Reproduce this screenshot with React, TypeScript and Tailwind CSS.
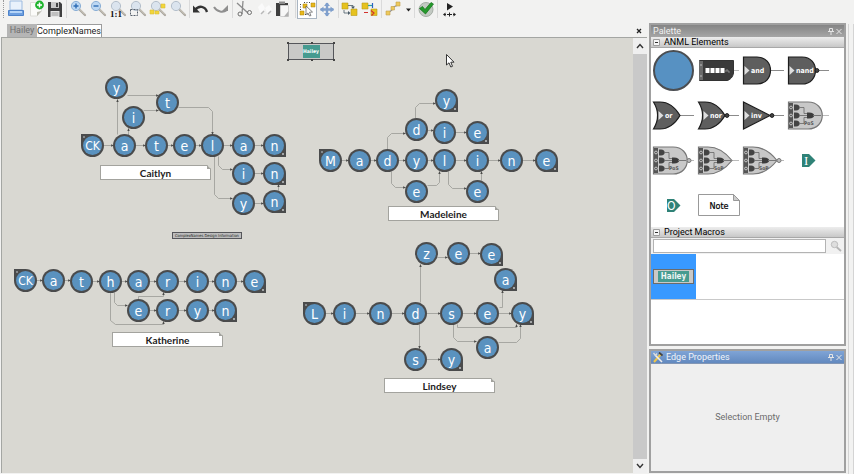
import type { ReactNode } from 'react';
import clsx from 'clsx';

type NodeKind = 'plain' | 'start' | 'report';
type GraphNode = [label: string, x: number, y: number, kind?: NodeKind];

// Top left corner of the drawing area on the diagram's grid
const ORIGIN = { x: 2, y: 38 };

const NODES: GraphNode[] = [
  // Caitlyn
  ['y', 116, 87], ['t', 167, 102], ['i', 133, 117],
  ['CK', 92, 145, 'start'], ['a', 124, 145], ['t', 156, 145], ['e', 184, 145], ['l', 212, 145],
  ['a', 243, 145], ['n', 274, 145, 'report'],
  ['i', 243, 173], ['n', 274, 173, 'report'],
  ['y', 243, 203], ['n', 274, 201, 'report'],
  // Madeleine
  ['y', 446, 100, 'report'],
  ['d', 416, 129], ['i', 444, 132], ['e', 477, 132, 'report'],
  ['M', 330, 160, 'start'], ['a', 359, 160], ['d', 387, 160], ['y', 416, 160], ['l', 444, 160],
  ['i', 477, 160], ['n', 511, 160], ['e', 546, 160, 'report'],
  ['e', 416, 191], ['e', 477, 191],
  // Katherine
  ['CK', 25, 280, 'start'], ['a', 53, 280], ['t', 81, 281], ['h', 110, 281], ['a', 138, 281],
  ['r', 167, 281], ['i', 197, 281], ['n', 225, 281], ['e', 254, 281, 'report'],
  ['e', 138, 310], ['r', 167, 310], ['y', 197, 310], ['n', 225, 310, 'report'],
  // Lindsey
  ['z', 426, 253], ['e', 458, 253], ['e', 491, 254, 'report'], ['a', 505, 279, 'report'],
  ['L', 314, 313, 'start'], ['i', 344, 313], ['n', 380, 313], ['d', 415, 313], ['s', 451, 313],
  ['e', 487, 313], ['y', 522, 313, 'report'],
  ['a', 487, 347], ['s', 415, 359], ['y', 451, 359, 'report'],
];

const EDGES = [
  // Caitlyn
  'M103 145H113', 'M135 145H145', 'M167 145H173', 'M195 145H201', 'M223 145H232', 'M254 145H263',
  'M117 134V99', 'M128 135V128', 'M127 95H158', 'M143 110H158',
  'M178 107H208L212 111V134', 'M218 156V165L222 169H232', 'M214 156V194L218 198H232',
  'M254 173H263', 'M254 203H263', 'M278 190V184',
  // Madeleine
  'M341 160H348', 'M370 160H376', 'M398 160H405', 'M427 160H433', 'M455 160H466', 'M488 160H500', 'M522 160H535',
  'M387 149V137L391 133H405', 'M415 118V107L419 103H435', 'M427 130H433', 'M455 132H466',
  'M391 171V183L395 187H405', 'M427 185H436L439 182V171', 'M448 171V184L452 188H466', 'M481 180V171',
  // Katherine
  'M36 280H42', 'M64 280H70', 'M92 281H99', 'M121 281H127', 'M149 281H156', 'M178 281H186', 'M208 281H214', 'M236 281H243',
  'M138 299V296H163V292', 'M114 292V302L117 305H127', 'M110 292V320L115 324H163V321',
  'M149 310H156', 'M178 310H186', 'M208 310H214',
  // Lindsey
  'M325 313H333', 'M355 313H369', 'M391 313H404', 'M426 313H440', 'M462 313H476', 'M498 313H511',
  'M420 302V264', 'M437 257H447', 'M469 253H480', 'M499 307H502V290', 'M419 324V348', 'M426 359H440',
  'M457 324V327H516V324', 'M453 324V337L457 341H476', 'M498 342H516L520 338V324',
];

const NOTES = [
  { text: 'Caitlyn', x: 100, y: 165 },
  { text: 'Madeleine', x: 388, y: 206 },
  { text: 'Katherine', x: 112, y: 332 },
  { text: 'Lindsey', x: 384, y: 378 },
];

function StateNode({ node }: { node: GraphNode }) {
  const [label, x, y, kind = 'plain'] = node;
  return (
    <div
      className={clsx(
        'absolute flex size-[23px] items-center justify-center bg-[#4a4b4c]',
        kind === 'plain' && 'rounded-full',
        kind === 'start' && 'rounded-full rounded-tl-[4px]',
        kind === 'report' && 'rounded-full rounded-br-[4px]',
      )}
      style={{ left: x - 11 - ORIGIN.x, top: y - 11 - ORIGIN.y }}
    >
      {kind === 'start' && <span className="absolute left-0.5 top-0.5 size-0.5 bg-[#85898c]" />}
      {kind === 'report' && <span className="absolute bottom-0.5 right-0.5 size-0.5 bg-[#a3a6a8]" />}
      <span
        className={clsx(
          'relative flex size-[19px] items-center justify-center rounded-full bg-[#5a92bf] leading-none text-white',
          label.length > 1 ? 'text-[12px]' : 'text-[14px]',
        )}
      >
        {label}
      </span>
    </div>
  );
}

function Note({ text, x, y }: { text: string; x: number; y: number }) {
  return (
    <div
      className="absolute h-[15px] w-[111px] border border-[#a3a39e] bg-white text-center font-['Lato',sans-serif] text-[10px] font-bold leading-[14px] text-[#1c1c1c]"
      style={{ left: x - ORIGIN.x, top: y - ORIGIN.y }}
    >
      {text}
      <svg className="absolute -right-px -top-px" width="4" height="4">
        <path d="M0 0H4V4Z" fill="#d8d8d1" />
        <path d="M0 0V4H4Z" fill="#a3a39e" />
      </svg>
    </div>
  );
}

function Tool({ label, active, children }: { label: string; active?: boolean; children: ReactNode }) {
  return (
    <button
      type="button"
      aria-label={label}
      className={clsx('h-5 w-5 shrink-0', active && 'h-[19px] border-x border-b border-[#a9b5c2] bg-white')}
    >
      <svg viewBox="0 0 20 20" className={clsx('h-5 w-5', active && '-ml-px')} fill="none">
        {children}
      </svg>
    </button>
  );
}

function Separator() {
  return <span className="mx-px h-[18px] w-px shrink-0 bg-[#dadada]" />;
}

function Lens({ children, pale }: { children?: ReactNode; pale?: boolean }) {
  return (
    <>
      <path d="M11 9L17 15" stroke="#a8a49c" strokeWidth="2.2" strokeLinecap="round" />
      <path d="M11.500 9L17 14.500" stroke="#e2ddd2" strokeWidth="0.8" />
      <circle cx="8" cy="6" r="4.600" fill={pale ? '#dbe4ee' : '#bcd7f2'} stroke={pale ? '#b4bfcb' : '#8cb0d6'} />
      {children}
    </>
  );
}

function Toolbar() {
  return (
    <header className="flex h-6 shrink-0 overflow-hidden pl-[3px]">
      <span className="mr-px h-[18px] w-px shrink-0 border-l border-dotted border-[#9a9a9a]" />
      <Tool label="Open">
        <path d="M5 1H17V10H5Z" fill="#e9f1fb" stroke="#9dbbe0" />
        <path d="M3.500 10.500H18.500V15.500H3.500Z" fill="#6d9fe0" stroke="#4c82ca" />
        <path d="M5 12H17" stroke="#b4d4f8" strokeWidth="2" />
      </Tool>
      <Tool label="New">
        <path d="M5.500 2.500H16.500V11L12 16H5.500Z" fill="#fbfbf9" stroke="#dcdcd8" />
        <path d="M16.500 11L12 16V12Z" fill="#b9b9ae" />
        <circle cx="14.500" cy="5" r="4.400" fill="#1fb42d" />
        <path d="M14.500 2.500V7.500M12 5H17" stroke="#fff" strokeWidth="1.500" />
      </Tool>
      <Tool label="Save">
        <path d="M3 2H15L17 4V17H3Z" fill="#3f3f40" />
        <path d="M6 2H14V8H6Z" fill="#c9c9c9" />
        <path d="M5.500 11H14.500V17H5.500Z" fill="#e6e6e6" />
        <path d="M6.500 13H13.500M6.500 15H13.500" stroke="#999" />
        <path d="M11 3H13V7H11Z" fill="#444" />
      </Tool>
      <Separator />
      <Tool label="Zoom in">
        <Lens><path d="M8 3.500V8.500M5.500 6H10.500" stroke="#2e6db5" strokeWidth="1.400" /></Lens>
      </Tool>
      <Tool label="Zoom out">
        <Lens><path d="M5.500 6H10.500" stroke="#2e6db5" strokeWidth="1.400" /></Lens>
      </Tool>
      <Tool label="Actual size">
        <Lens pale />
        <text x="2" y="17" fontSize="9" fontWeight="700" fill="#111" fontFamily="Liberation Serif, serif">1:1</text>
      </Tool>
      <Tool label="Zoom to selection">
        <Lens pale />
        <path d="M2.500 9.500H9.500V15.500H2.500Z" stroke="#56606c" strokeDasharray="2 1" />
      </Tool>
      <Tool label="Zoom to elements">
        <Lens pale />
        <path d="M13 4H17V8H13ZM2 10H6V14H2ZM7 11H11V14H7Z" fill="#f3d638" stroke="#d9bc3a" strokeWidth="0.600" />
      </Tool>
      <Tool label="Zoom to fit"><Lens pale /></Tool>
      <Separator />
      <Tool label="Undo">
        <path d="M4 10C8 5 14 6 16 12" stroke="#333" strokeWidth="2.400" />
        <path d="M2 5.500V12.500H9Z" fill="#333" />
      </Tool>
      <Tool label="Redo">
        <path d="M16 10C12 13 6 12 3 7" stroke="#8f8f8f" strokeWidth="2" />
        <path d="M17 5V11H11Z" fill="#8f8f8f" />
      </Tool>
      <Separator />
      <Tool label="Cut">
        <path d="M3 3L14 13M9 1L8 14" stroke="#8b8b8b" strokeWidth="1.300" />
        <circle cx="6" cy="14" r="2" stroke="#6f6f6f" />
        <circle cx="15.500" cy="12.500" r="2" stroke="#6f6f6f" />
      </Tool>
      <Tool label="Copy">
        <path d="M4 7L8 3L11 8L7 15Z M11 8L15 5L18 9L14 15Z" fill="#fafafa" />
        <path d="M7 14L10 11M14 14L17 11" stroke="#b8b8b8" strokeWidth="1.500" />
      </Tool>
      <Tool label="Paste">
        <path d="M2 3H14V6H6V16H2Z" fill="#3e3e3e" />
        <path d="M5 1.500H11V4H5Z" fill="#8d8d8d" />
        <path d="M6.500 5.500H14.500V16.500H6.500Z" fill="#f7f7f7" stroke="#d0d0d0" />
        <path d="M14.500 11L10 16.500H14.500Z" fill="#b0b0b0" />
      </Tool>
      <Separator />
      <Tool label="Select" active>
        <path d="M3.500 4V14.500H12M7 2.500H14" stroke="#444" strokeDasharray="1 1.500" />
        <path d="M6 4H10V8H6ZM14 3H18V7H14ZM3 11H7V15H3Z" fill="#e9b91d" stroke="#a77c0a" strokeWidth="0.500" />
        <path d="M9 6L15.500 12L12.500 12.300L14 15.500L12.500 16L11 13L9 14.500Z" fill="#fff" stroke="#555" strokeWidth="0.700" />
      </Tool>
      <Tool label="Pan">
        <path d="M10 3V16M3.500 9.500H16.500" stroke="#7f9fcc" strokeWidth="2.400" />
        <path d="M10 2.500L13 6H7ZM10 16.500L13 13H7ZM3 9.500L6.500 6.500V12.500ZM17 9.500L13.500 6.500V12.500Z" fill="#7f9fcc" />
      </Tool>
      <Separator />
      <Tool label="Connect">
        <path d="M2 3H8V9H2ZM11 9H17V15.500H11Z" fill="#e6c21e" stroke="#b99b1c" strokeWidth="0.600" />
        <path d="M8 5.500H13V8M4 10V13H9" stroke="#4a5b67" strokeWidth="0.800" />
        <path d="M11 6.500H15L13 9ZM8 11V15L10.500 13Z" fill="#4a5b67" />
      </Tool>
      <Tool label="Disconnect">
        <path d="M2 3H8V9H2ZM11 9H17V15.500H11Z" fill="#e6c21e" stroke="#b99b1c" strokeWidth="0.600" />
        <path d="M8 5.500H12" stroke="#2aa39c" strokeWidth="1.200" />
        <path d="M12.500 3V8" stroke="#2a62c4" strokeWidth="1.200" />
        <path d="M4 12.500H8M11 10.500L14 13L11.500 15.500" stroke="#d2322d" strokeWidth="1.200" />
      </Tool>
      <Separator />
      <Tool label="Edge style">
        <path d="M5 13L9 10L9.500 7.500L15 5" stroke="#8d8f92" strokeWidth="1.200" />
        <path d="M3 11H7V15H3ZM8 6.500H11.500V10H8ZM13 2H17V6H13Z" fill="#edc95a" stroke="#c4a049" strokeWidth="0.600" />
      </Tool>
      <button type="button" aria-label="Edge style options" className="h-5 w-2.5 shrink-0">
        <svg width="10" height="20"><path d="M3 8.500H8L5.500 11.500Z" fill="#222" /></svg>
      </button>
      <Separator />
      <Tool label="Validate">
        <circle cx="10" cy="9.500" r="7" fill="#c3cac3" stroke="#a6aea6" />
        <path d="M3.500 8.500L6.500 6.500L9 9.500L15 2.500L17.500 4L9.500 14Z" fill="#25992c" stroke="#137019" strokeWidth="0.700" />
      </Tool>
      <Separator />
      <Tool label="Simulate">
        <path d="M8 3L14 6.500L8 10.500Z" fill="#222" />
        <path d="M5 14.500H16" stroke="#222" strokeDasharray="2 1" />
        <path d="M6.500 12.500V16.500L4 14.500ZM14.500 12.500V16.500L17 14.500ZM10 12.500H11V16.500H10Z" fill="#222" />
      </Tool>
    </header>
  );
}

function Canvas() {
  return (
    <div className="relative min-w-0 flex-1 overflow-hidden border-l border-t border-[#a4a6a3] bg-[#d9d8d2]">
      <svg className="absolute left-0 top-0 h-full w-full" fill="none">
        <defs>
          <marker id="arrow" markerWidth="4" markerHeight="4" refX="3" refY="2" orient="auto">
            <path d="M0 0.500L3.500 2L0 3.500Z" fill="#4c4c4a" />
          </marker>
        </defs>
        <g transform={`translate(${-ORIGIN.x + 0.5} ${-ORIGIN.y + 0.5})`} stroke="#9b9b96" strokeWidth="0.800">
          {EDGES.map((d) => (
            <path key={d} d={d} markerEnd="url(#arrow)" />
          ))}
        </g>
      </svg>
      {NODES.map((node) => (
        <StateNode key={`${node[1]}-${node[2]}`} node={node} />
      ))}
      {NOTES.map((note) => (
        <Note key={note.text} {...note} />
      ))}

      {/* Macro instance with its selection handles */}
      <div className="absolute left-[286px] top-[5px] flex h-[17px] w-[46px] items-center justify-center border border-[#55565a] bg-[#c9c9c7]">
        <span className="flex h-[13px] w-[17px] items-center justify-center bg-[#469b90] text-[5px] font-bold leading-none text-white">Hailey</span>
        <span className="absolute -left-0.5 -top-0.5 size-0.5 bg-[#444]" />
        <span className="absolute -right-0.5 -top-0.5 size-0.5 bg-[#444]" />
        <span className="absolute -bottom-0.5 -left-0.5 size-0.5 bg-[#444]" />
        <span className="absolute -bottom-0.5 -right-0.5 size-0.5 bg-[#444]" />
        <span className="absolute -top-0.5 left-[22px] size-0.5 bg-[#444]" />
        <span className="absolute -bottom-0.5 left-[22px] size-0.5 bg-[#444]" />
      </div>
      <div className="absolute left-[170px] top-[194px] flex h-[7px] w-[70px] items-center justify-center whitespace-nowrap border border-[#55565a] bg-[#bdbdbd] text-[4px] leading-none text-[#222]">
        ComplexNames Design Information
      </div>

      {/* Mouse pointer */}
      <svg className="absolute left-[444px] top-[16px]" width="10" height="15" viewBox="0 0 10 15">
        <path d="M0.500 0.500V11L3 8.800L4.800 13L6.500 12.300L4.800 8.200H8Z" fill="#fff" stroke="#222" strokeWidth="0.900" />
      </svg>
    </div>
  );
}

function Editor() {
  return (
    <main className="mb-px flex min-w-0 flex-1 flex-col pl-px">
      <div className="flex h-[13px] shrink-0 items-stretch pl-1.5 text-[9px] leading-[13px]">
        <button type="button" className="w-[30px] bg-[#b5b5b5] text-[#707070]">Hailey</button>
        <button type="button" className="w-[65px] whitespace-nowrap border-r border-t border-[#9c9c9c] bg-white leading-[12px] text-[#1c1c1c]">ComplexNames</button>
        <button type="button" aria-label="Close editor" className="ml-auto mr-0.5 flex w-3 items-center justify-center">
          <svg width="6" height="6"><path d="M1 1L5 5M5 1L1 5" stroke="#222" strokeWidth="1.300" /></svg>
        </button>
      </div>
      <div className="flex min-h-0 flex-1 font-['DejaVu_Sans_Condensed','DejaVu_Sans',sans-serif]">
        <Canvas />
        <div className="flex w-[14px] shrink-0 flex-col border-t border-[#a4a6a3] bg-[#c9c9c9]">
          <button type="button" aria-label="Scroll up" className="flex h-4 items-center justify-center bg-[#efefef]">
            <svg width="8" height="6" fill="none"><path d="M1 5L4 1.500L7 5" stroke="#333" strokeWidth="1.400" /></svg>
          </button>
          <button type="button" aria-label="Scroll down" className="mt-auto flex h-[14px] items-center justify-center bg-[#efefef]">
            <svg width="8" height="6" fill="none"><path d="M1 1L4 4.500L7 1" stroke="#333" strokeWidth="1.400" /></svg>
          </button>
        </div>
      </div>
    </main>
  );
}

function PanelButtons() {
  return (
    <span className="ml-auto flex gap-0.5">
      <button type="button" aria-label="Pin">
        <svg width="6" height="7" fill="none"><path d="M1.500 0.500H4.500V3.500H1.500ZM0 3.500H6M3 3.500V7" stroke="#e4e4e4" /></svg>
      </button>
      <button type="button" aria-label="Close">
        <svg width="6" height="7" fill="none"><path d="M0.500 1L5.500 6M5.500 1L0.500 6" stroke="#e4e4e4" /></svg>
      </button>
    </span>
  );
}

function SectionHeader({ title }: { title: string }) {
  return (
    <button type="button" className="flex h-[11px] w-full items-center gap-1 border-b border-[#a8a8a8] bg-linear-to-b from-[#ededed] to-[#c8c8c8] pl-0.5 text-[9px] leading-[10px] text-black">
      <svg width="7" height="7" fill="none">
        <path d="M0.500 0.500H6.500V6.500H0.500Z" stroke="#9d9d9d" fill="#f6f6f6" />
        <path d="M2 3.500H5" stroke="#333" />
      </svg>
      {title}
    </button>
  );
}

function PaletteItem({ label, children }: { label: string; children: ReactNode }) {
  return (
    <button type="button" aria-label={label} className="size-[45px]">
      <svg viewBox="0 0 45 45" className="size-[45px]" fill="none">{children}</svg>
    </button>
  );
}

const GATE_SHAPES = {
  and: 'M2.500 9H16C34 9 34 36 16 36H2.500Z',
  or: 'M2.500 9H9C18 9 24 14 29 22.500C24 31 18 36 9 36H2.500C8 27 8 18 2.500 9Z',
  inv: 'M2.500 9L29 22.500L2.500 36Z',
};

function Gate({ label, shape, inverted }: { label: string; shape: keyof typeof GATE_SHAPES; inverted?: boolean }) {
  const offset = shape === 'or' ? 4 : 0;
  return (
    <PaletteItem label={label}>
      <path d="M29 22.500H43" stroke="#8b8b8b" />
      <path d={GATE_SHAPES[shape]} fill="#5e5e5e" stroke="#1d1d1d" strokeWidth="1.200" />
      <path d="M3.500 18L8.500 22.500L3.500 27Z" transform={`translate(${offset} 0)`} fill="#dedede" />
      {inverted && <circle cx="31" cy="22.500" r="1.900" fill="#444" stroke="#1d1d1d" />}
      <text x={10 + offset} y="25" fontSize="7" fontWeight="700" fill="#fff">{label}</text>
    </PaletteItem>
  );
}

// A sum or product gate: three small gates that feed a fourth one
function CompoundGate({ label, caption, round, inverted }: { label: string; caption: string; round?: boolean; inverted?: boolean }) {
  return (
    <PaletteItem label={label}>
      <path d="M35 22.500H43" stroke="#bbb" />
      <path
        d={round ? 'M2.500 9H22C41 9 41 36 22 36H2.500Z' : 'M2.500 9H12C23 9 30 15 36 22.500C30 30 23 36 12 36H2.500Z'}
        fill="#c8c8c8"
        stroke="#777"
        strokeWidth="1.200"
      />
      <path d="M3 10H7V35H3Z" fill="#555" />
      {[14.5, 22.5, 30.5].map((y) => (
        <g key={y}>
          <path d={`M8 ${y - 3}H10C15 ${y - 3} 15 ${y + 3} 10 ${y + 3}H8Z`} fill="#444" />
          <circle cx="5" cy={y} r="1.400" stroke="#ddd" strokeWidth="0.800" />
        </g>
      ))}
      <path d="M14 14.500H18V20.500H22M14 22.500H22M14 30.500H18V24.500H22" stroke="#666" strokeWidth="0.800" />
      <path d="M21 19.500H23C30 19.500 30 25.500 23 25.500H21Z" fill="#3c3c3c" />
      <path d="M27 22.500H35" stroke="#777" />
      {inverted && <circle cx="38" cy="22.500" r="2" fill="#bbb" stroke="#777" />}
      <text x="18" y="32" fontSize="5" fontWeight="700" fill="#555">{caption}</text>
    </PaletteItem>
  );
}

function Palette() {
  return (
    <section className="flex h-[323px] shrink-0 flex-col border-2 border-[#a0a0a0] bg-white">
      <h2 className="flex h-[12px] shrink-0 items-center bg-linear-to-b from-[#858585] to-[#a6a6a6] px-0.5 text-[9px] leading-[12px] text-[#f0f0f0]">
        Palette
        <PanelButtons />
      </h2>
      <SectionHeader title="ANML Elements" />
      <div className="flex h-[179px] flex-wrap content-start font-['DejaVu_Sans_Condensed','DejaVu_Sans',sans-serif]">
        <PaletteItem label="State transition element">
          <circle cx="22.500" cy="22.500" r="19.500" fill="#5791c2" stroke="#4b4e52" strokeWidth="2" />
        </PaletteItem>
        <PaletteItem label="Counter">
          <path d="M36 22.500H43" stroke="#bbb" />
          <path d="M3.500 12.500H37.500V25C37 29 34 32 31 32.500H3.500Z" fill="#3a3a3a" stroke="#333" />
          <path d="M3 13H7V32H3Z" fill="#6a6a6a" />
          <path d="M9.500 20H13.500V25H9.500ZM14.500 20H18.500V25H14.500ZM19.500 20H23.500V25H19.500ZM24.500 20H28.500V25H24.500Z" fill="#fff" />
          <path d="M30 24V22H32V24H34" stroke="#999" strokeWidth="0.800" />
          <path d="M4 17H6M4 28H6" stroke="#bbb" />
        </PaletteItem>
        <Gate label="and" shape="and" />
        <Gate label="nand" shape="and" inverted />
        <Gate label="or" shape="or" />
        <Gate label="nor" shape="or" inverted />
        <Gate label="inv" shape="inv" inverted />
        <CompoundGate label="Product of sums" caption="PoS" round />
        <CompoundGate label="Negated product of sums" caption="PoS" round inverted />
        <CompoundGate label="Sum of products" caption="SoP" />
        <CompoundGate label="Negated sum of products" caption="SoP" inverted />
        <PaletteItem label="Input">
          <path d="M16 16H23L29.500 22.500L23 29H16Z" fill="#2f8277" />
          <text x="18" y="27" fontSize="13" fill="#fff" fontFamily="Liberation Serif, serif">I</text>
        </PaletteItem>
        <PaletteItem label="Output">
          <path d="M16 16H23L29.500 22.500L23 29H16Z" fill="#2f8277" />
          <text x="16" y="27" fontSize="12" fill="#fff">O</text>
        </PaletteItem>
        <PaletteItem label="Note">
          <path d="M2.500 11.500H37.500L43.500 17.500V32.500H2.500Z" fill="#fff" stroke="#999" />
          <path d="M37.500 11.500V17.500H43.500Z" fill="#ccc" stroke="#999" />
          <text x="23" y="26" fontSize="9" textAnchor="middle" fill="#000" stroke="#000" strokeWidth="0.200">Note</text>
        </PaletteItem>
      </div>
      <SectionHeader title="Project Macros" />
      <div className="flex h-[16px] shrink-0 items-stretch gap-1 bg-[#f1f1f1] py-px pl-0.5 pr-0.5">
        <input type="text" aria-label="Search macros" className="min-w-0 flex-1 border border-[#b3b3b3] bg-white px-1 text-[9px] leading-none" />
        <button type="button" aria-label="Search" className="w-3">
          <svg width="12" height="13" viewBox="0 0 12 13" fill="none">
            <path d="M6.500 7L11 11" stroke="#b5b5b5" strokeWidth="1.800" />
            <circle cx="4.500" cy="4.500" r="3.200" fill="#dedede" stroke="#bdbdbd" />
          </svg>
        </button>
      </div>
      <div className="border-b border-[#c9c9c9] font-['DejaVu_Sans_Condensed','DejaVu_Sans',sans-serif]">
        <button type="button" className="flex size-[45px] items-center justify-center bg-[#3899ff]">
          <span className="flex h-[15px] w-[41px] items-center justify-center border border-[#6b6b6b] bg-[#c9c9c7]">
            <span className="h-[11px] w-[31px] bg-[#469b90] text-center text-[8px] font-bold leading-[11px] text-[#eef5f4]">Hailey</span>
          </span>
        </button>
      </div>
    </section>
  );
}

function EdgeProperties() {
  return (
    <section className="flex min-h-0 flex-1 flex-col border-2 border-[#a0a0a0] bg-[#efefef]">
      <h2 className="flex h-[13px] shrink-0 items-center gap-[3px] border-b border-[#8296b5] bg-linear-to-b from-[#7fa4d6] to-[#6289bf] px-0.5 text-[9px] leading-[12px] text-[#f0f4fa]">
        <svg width="10" height="11" viewBox="0 0 10 11" fill="none">
          <path d="M1 10L8 2" stroke="#f0c64a" strokeWidth="2" />
          <path d="M2 3L9 10" stroke="#eee" strokeWidth="1.600" />
          <path d="M0.500 1L2.500 3.500L4 1.500" stroke="#ddd" strokeWidth="1.300" />
          <path d="M6 0.500L9.500 3.500" stroke="#444" strokeWidth="1.800" />
        </svg>
        Edge Properties
        <PanelButtons />
      </h2>
      <p className="flex flex-1 items-center justify-center text-[9px] text-[#6c6c6c]">Selection Empty</p>
    </section>
  );
}

export default function App() {
  return (
    <div className="flex h-screen flex-col overflow-hidden bg-[#f2f2f1] font-['Roboto',sans-serif]">
      <Toolbar />
      <div className="flex min-h-0 flex-1">
        <Editor />
        <aside className="-mt-px mb-px ml-0.5 flex w-[197px] shrink-0 flex-col gap-[3px]">
          <Palette />
          <EdgeProperties />
        </aside>
        <div className="ml-0.5 w-1.5 shrink-0 border-x border-[#d4d4d4]" />
      </div>
    </div>
  );
}
